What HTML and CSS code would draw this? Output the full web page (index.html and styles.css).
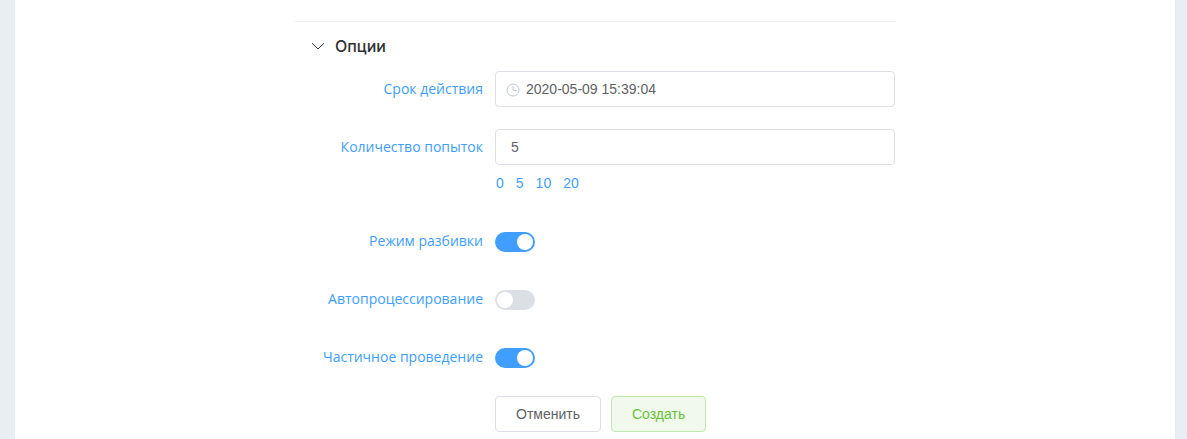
FILE: index.html
```html
<!DOCTYPE html>
<html lang="ru">
<head>
<meta charset="utf-8">
<title>Опции</title>
<link rel="stylesheet" href="styles.css">
</head>
<body>
<main class="panel">
  <section class="form">
    <div class="section-head">
      <svg class="chevron" width="14" height="14" viewBox="0 0 14 14"><path d="M1 4.2 7 10 13 4.2" fill="none" stroke="#303133" stroke-width="1"/></svg>
      <span>Опции</span>
    </div>
    <div class="row row-first">
      <label class="label">Срок действия</label>
      <div class="control">
        <div class="input input-date">
          <svg class="clock" width="14" height="14" viewBox="0 0 14 14"><circle cx="7" cy="7" r="6" fill="none" stroke="#c0c4cc" stroke-width="1"/><path d="M7 3V7.5H10.5" fill="none" stroke="#c0c4cc" stroke-width="1"/></svg>
          <span>2020-05-09 15:39:04</span>
        </div>
      </div>
    </div>
    <div class="row">
      <label class="label">Количество попыток</label>
      <div class="control">
        <div class="input">5</div>
        <div class="presets"><a>0</a><a>5</a><a>10</a><a>20</a></div>
      </div>
    </div>
    <div class="row row-switch">
      <label class="label">Режим разбивки</label>
      <div class="control"><span class="switch on"></span></div>
    </div>
    <div class="row row-switch">
      <label class="label">Автопроцессирование</label>
      <div class="control"><span class="switch"></span></div>
    </div>
    <div class="row row-switch row-last-switch">
      <label class="label">Частичное проведение</label>
      <div class="control"><span class="switch on"></span></div>
    </div>
    <div class="row row-actions">
      <div class="label"></div>
      <div class="control actions">
        <button class="btn">Отменить</button>
        <button class="btn btn-success">Создать</button>
      </div>
    </div>
  </section>
</main>
</body>
</html>
```
FILE: styles.css
```css
* { box-sizing: border-box; }
html, body { height: 100%; }
body {
  margin: 0;
  background: #e9eef6;
  font-family: "Open Sans", "Liberation Sans", sans-serif;
  font-size: 14px;
  color: #606266;
  overflow: hidden;
}
.panel {
  margin: 0 12px 0 15px;
  height: 100%;
  background: #fff;
}
.form {
  width: 600px;
  margin-left: 280px;
  padding-top: 21px;
}
.section-head {
  height: 49px;
  border-top: 1px solid #ebeef5;
  display: flex;
  align-items: center;
  gap: 10px;
  padding-left: 16px;
  font-family: "Inter", "Open Sans", sans-serif;
  font-size: 16px;
  font-weight: 500;
  color: #303133;
}
.row {
  display: flex;
  margin-bottom: 22px;
  line-height: 36px;
}
.row-first { margin-top: 1px; }
.row-last-switch { margin-bottom: 21px; }
.label {
  width: 200px;
  flex: none;
  padding-right: 12px;
  text-align: right;
  color: #409eff;
  white-space: nowrap;
}
.control { flex: 1; min-width: 0; }
.input {
  height: 36px;
  line-height: 34px;
  border: 1px solid #dcdfe6;
  border-radius: 4px;
  padding: 0 15px;
  font-family: "Liberation Sans", sans-serif;
}
.input-date {
  display: flex;
  align-items: center;
  gap: 6px;
  padding-left: 10px;
}
.clock { flex: none; margin-top: 2px; }
.presets {
  display: flex;
  gap: 12px;
  line-height: 36px;
  color: #409eff;
  font-family: "Liberation Sans", sans-serif;
  padding-left: 1px;
}
.row-switch .control { display: flex; align-items: center; }
.switch {
  display: block;
  position: relative;
  width: 40px;
  height: 20px;
  margin-top: 2px;
  border-radius: 10px;
  background: #dcdfe6;
}
.switch::after {
  content: "";
  position: absolute;
  top: 2px;
  left: 2px;
  width: 16px;
  height: 16px;
  border-radius: 50%;
  background: #fff;
}
.switch.on { background: #409eff; }
.switch.on::after { left: 22px; }
.actions { display: flex; gap: 10px; }
.btn {
  height: 36px;
  padding: 0 20px;
  border: 1px solid #dcdfe6;
  border-radius: 4px;
  background: #fff;
  color: #606266;
  font-family: "Liberation Sans", sans-serif;
  font-size: 14px;
  line-height: 1;
}
.btn-success {
  background: #f0f9eb;
  border-color: #c2e7b0;
  color: #67c23a;
}
```
